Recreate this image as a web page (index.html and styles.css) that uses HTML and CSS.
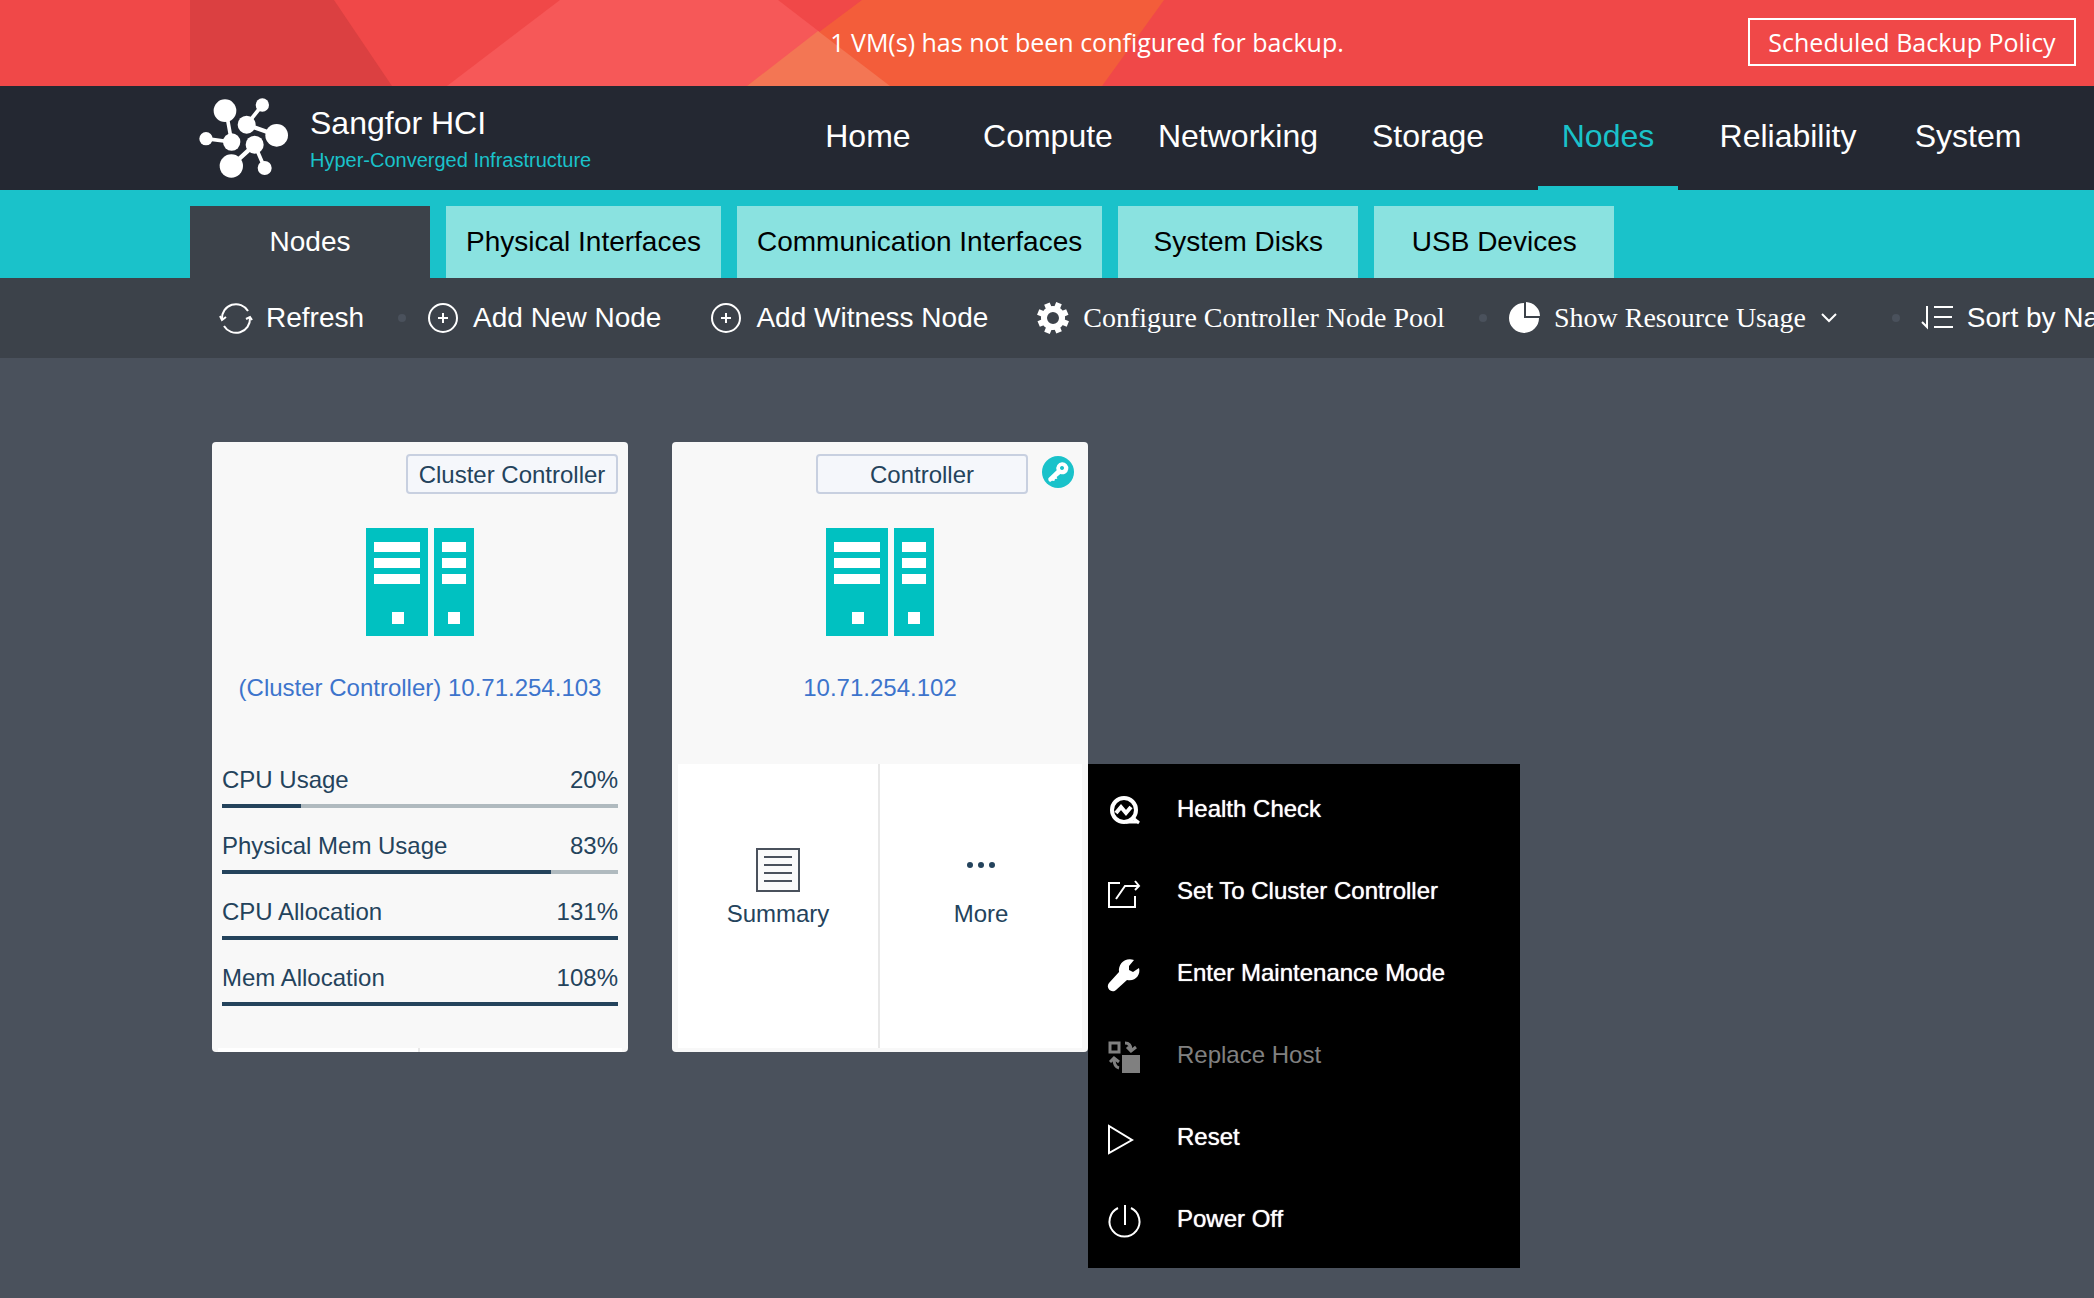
FILE: index.html
```html
<!DOCTYPE html>
<html lang="en">
<head>
<meta charset="utf-8">
<title>Sangfor HCI - Nodes</title>
<link rel="stylesheet" href="styles.css">
</head>
<body>
<svg class="sprite" aria-hidden="true">
  <symbol id="icon-add" viewBox="0 0 32 32"><circle cx="16" cy="16" r="14" fill="none" stroke="currentColor" stroke-width="2"/><path d="M11 16h10M16 11v10" stroke="currentColor" stroke-width="2"/></symbol>
  <symbol id="icon-server" viewBox="0 0 108 108"><path fill="#00c1c1" d="M0 0h62v108H0zM68 0h40v108H68z"/><path fill="#fff" d="M8 14h46v10H8zM8 30h46v10H8zM8 46h46v10H8zM76 14h24v10H76zM76 30h24v10H76zM76 46h24v10H76zM26 84h12v12H26zM82 84h12v12H82z"/></symbol>
</svg>

<div class="banner">
  <svg class="banner-art" viewBox="0 0 974 86" aria-hidden="true">
    <path fill="#db4041" d="M0 0h144l58 86H0z"/>
    <path fill="#f65858" d="M370 0h218l112 86H257z"/>
    <path fill="#f35d3a" d="M672 0h302l-62 86H557z"/>
    <path fill="#f37654" d="M628 31l72 55H557z"/>
  </svg>
  <p class="banner-text">1 VM(s) has not been configured for backup.</p>
  <button class="banner-button" type="button">Scheduled Backup Policy</button>
</div>

<header class="header">
  <a class="brand" href="#">
    <svg class="logo" viewBox="0 0 330 300" aria-hidden="true">
      <g stroke="#fff" stroke-width="13"><path d="M108 62L125 156M48 146L125 156M217 45L170 104M194 164L224 234" stroke-width="11"/><path d="M170 104L260 136M194 164L124 228"/></g>
      <g fill="#fff"><circle cx="105" cy="62" r="34"/><circle cx="217" cy="45" r="20"/><circle cx="170" cy="104" r="27"/><circle cx="260" cy="136" r="34"/><circle cx="48" cy="146" r="20"/><circle cx="125" cy="156" r="26"/><circle cx="194" cy="164" r="27"/><circle cx="124" cy="228" r="35"/><circle cx="224" cy="234" r="21"/></g>
    </svg>
    <span class="brand-text"><span class="brand-name">Sangfor HCI</span><span class="brand-sub">Hyper-Converged Infrastructure</span></span>
  </a>
  <nav class="nav" aria-label="Main">
    <a href="#">Home</a><a href="#">Compute</a><a href="#">Networking</a><a href="#">Storage</a><a class="active" href="#">Nodes</a><a href="#">Reliability</a><a href="#">System</a>
  </nav>
</header>

<nav class="tabs" aria-label="Nodes sections">
  <a class="tab active" href="#">Nodes</a><a class="tab" href="#">Physical Interfaces</a><a class="tab" href="#">Communication Interfaces</a><a class="tab" href="#">System Disks</a><a class="tab" href="#">USB Devices</a>
</nav>

<div class="toolbar">
  <button type="button" class="tool"><svg class="icon" viewBox="0 0 32 32" aria-hidden="true"><g fill="none" stroke="currentColor" stroke-width="2"><path d="M2 17A14 14 0 0 1 28 9M30 16A14 14 0 0 1 4 24"/><path d="M0 14l2 4 4-3M32 18l-2-3-4 2"/></g></svg>Refresh</button>
  <span class="dot"></span>
  <button type="button" class="tool"><svg class="icon" aria-hidden="true"><use href="#icon-add"/></svg>Add New Node</button>
  <button type="button" class="tool"><svg class="icon" aria-hidden="true"><use href="#icon-add"/></svg>Add Witness Node</button>
  <button type="button" class="tool serif"><svg class="icon" viewBox="0 0 32 32" aria-hidden="true"><g fill="none" stroke="currentColor" transform="rotate(22 16 16)"><circle cx="16" cy="16" r="9" stroke-width="6"/><path d="M16 0v6M16 26v6M0 16h6M26 16h6M5 5l4 4M23 23l4 4M27 5l-4 4M9 23l-4 4" stroke-width="6"/></g></svg>Configure Controller Node Pool</button>
  <span class="dot"></span>
  <button type="button" class="tool serif"><svg class="icon" viewBox="0 0 32 32" aria-hidden="true"><path fill="currentColor" d="M16 1v15h15A15 15 0 1 1 16 1zM18 0a15 14 0 0 1 14 14H18z"/></svg>Show Resource Usage<svg class="chevron" viewBox="0 0 18 10" aria-hidden="true"><path d="M2 1l7 7 7-7" fill="none" stroke="currentColor" stroke-width="2"/></svg></button>
  <span class="dot"></span>
  <button type="button" class="tool"><svg class="icon" viewBox="0 0 32 32" aria-hidden="true"><path d="M6 4v21L1 20M13 5h19M13 15h18M13 25h19" fill="none" stroke="currentColor" stroke-width="2"/></svg>Sort by Name</button>
</div>

<main class="nodes">
  <article class="card">
    <div class="card-head"><span class="tag">Cluster Controller</span></div>
    <svg class="server" aria-hidden="true"><use href="#icon-server"/></svg>
    <a class="node-name" href="#">(Cluster Controller) 10.71.254.103</a>
    <div class="usage">
      <div class="metric"><span>CPU Usage</span><span>20%</span><div class="bar"><div class="fill" style="width:20%"></div></div></div>
      <div class="metric"><span>Physical Mem Usage</span><span>83%</span><div class="bar"><div class="fill" style="width:83%"></div></div></div>
      <div class="metric"><span>CPU Allocation</span><span>131%</span><div class="bar"><div class="fill" style="width:100%"></div></div></div>
      <div class="metric"><span>Mem Allocation</span><span>108%</span><div class="bar"><div class="fill" style="width:100%"></div></div></div>
    </div>
    <div class="card-foot"><span></span><span></span></div>
  </article>

  <article class="card">
    <div class="card-head"><span class="tag">Controller</span>
      <svg class="key" viewBox="0 0 96 96" aria-hidden="true"><circle cx="48" cy="48" r="48" fill="#1ac2ca"/><path fill="#fff" fill-rule="evenodd" d="M60 19a18 18 0 1 1-5 35L44 63l2 5-7 1-2 6-7-1-6 4-5-5v-6l25-24A18 18 0 0 1 60 19zM60 30a6 6 0 1 0 .1 0z"/></svg>
    </div>
    <svg class="server" aria-hidden="true"><use href="#icon-server"/></svg>
    <a class="node-name" href="#">10.71.254.102</a>
    <div class="actions">
      <button type="button" class="action"><svg class="action-icon" viewBox="0 0 44 44" aria-hidden="true"><g fill="none" stroke="#4a515c" stroke-width="2"><path fill="#fafafa" d="M1 1h42v42H1z"/><path d="M8 9h28M8 17h28M8 25h28M8 33h28"/></g></svg>Summary</button>
      <button type="button" class="action" aria-expanded="true"><svg class="action-icon" viewBox="0 0 44 44" aria-hidden="true"><g fill="#24435c"><circle cx="11" cy="17" r="3"/><circle cx="22" cy="17" r="3"/><circle cx="33" cy="17" r="3"/></g></svg>More</button>
    </div>
    <div class="menu">
      <button type="button"><svg class="icon" viewBox="0 0 32 32" aria-hidden="true"><g fill="none" stroke="currentColor"><circle cx="16" cy="15" r="12" stroke-width="4"/><path d="M25 23l6 5M18 27h13" stroke-width="3"/><path d="M8 18l5-6 5 6 5-6" stroke-width="4"/></g></svg>Health Check</button>
      <button type="button"><svg class="icon" viewBox="0 0 32 32" aria-hidden="true"><path d="M12 6H1v24h26V19M8 22l9-13h14M27 4l4 5-4 4" fill="none" stroke="currentColor" stroke-width="2"/></svg>Set To Cluster Controller</button>
      <button type="button"><svg class="icon" viewBox="0 0 32 32" aria-hidden="true"><path fill="currentColor" d="M26 1l-5 6v4l4 2 6-4c2 7-4 14-12 12L8 31c-4 4-11-2-7-7l10-11C10 5 17-2 26 1z"/></svg>Enter Maintenance Mode</button>
      <button type="button" disabled><svg class="icon" viewBox="0 0 32 32" aria-hidden="true"><path fill="currentColor" d="M14 14h18v18H14z"/><g fill="none" stroke="currentColor" stroke-width="3"><path d="M2 2h9v9H2zM17 2c4 0 6 2 6 7M19 6l4 4 5-4M11 27c-4-1-5-4-5-9M2 21l4-4 5 4"/></g></svg>Replace Host</button>
      <button type="button"><svg class="icon" viewBox="0 0 32 32" aria-hidden="true"><path d="M1 3v27l23-13z" fill="none" stroke="currentColor" stroke-width="2"/></svg>Reset</button>
      <button type="button"><svg class="icon" viewBox="0 0 32 32" aria-hidden="true"><path d="M10 3a15 15 0 1 0 13 0M17 0v20" fill="none" stroke="currentColor" stroke-width="2"/></svg>Power Off</button>
    </div>
  </article>
</main>
</body>
</html>
```
FILE: styles.css
```css
* { box-sizing: border-box; }

body {
  margin: 0;
  min-height: 100vh;
  background: #4a515c;
  color: #24435c;
  font-family: "Liberation Sans", Arial, sans-serif;
  font-size: 24px;
  line-height: 32px;
  overflow-x: hidden;
}

a { color: inherit; text-decoration: none; }
button { margin: 0; padding: 0; border: 0; background: none; color: inherit; font: inherit; cursor: pointer; }
svg { display: block; flex: none; }
.sprite { position: absolute; width: 0; height: 0; }
.icon { width: 32px; height: 32px; overflow: visible; }

/* Alert banner */
.banner {
  position: relative;
  display: flex;
  align-items: center;
  height: 86px;
  padding: 0 18px 2px 426px;
  background: #f04848;
  color: #fff;
  font-family: "Open Sans", "Noto Sans", sans-serif;
  font-size: 25px;
}
.banner-art { position: absolute; left: 190px; top: 0; width: 974px; height: 86px; }
.banner-text { position: relative; flex: 1; margin: 0; text-align: center; }
.banner-button { position: relative; width: 328px; height: 48px; border: 2px solid #fff; line-height: 40px; }

/* Header */
.header {
  display: flex;
  justify-content: space-between;
  height: 104px;
  padding: 0 56px 0 190px;
  background: #242832;
  color: #fff;
}
.brand { display: flex; align-items: center; gap: 10px; }
.logo { width: 110px; height: 100px; margin-top: 4px; }
.brand-text { display: flex; flex-direction: column; gap: 4px; }
.brand-name { font-size: 32px; line-height: 40px; }
.brand-sub { color: #1ac2ca; font-size: 20px; line-height: 26px; }
.nav { display: flex; gap: 40px; font-size: 32px; line-height: 100px; }
.nav a { min-width: 140px; border-bottom: 4px solid transparent; text-align: center; }
.nav .active { border-color: #1ac2ca; color: #1ac2ca; }

/* Section tabs */
.tabs { display: flex; gap: 16px; padding: 16px 0 0 190px; background: #1ac2ca; }
.tab {
  min-width: 240px;
  padding: 0 20px;
  background: #8ae2e0;
  color: #000;
  font-size: 28px;
  line-height: 72px;
  text-align: center;
}
.tab.active { background: #3c424a; color: #fff; }

/* Toolbar */
.toolbar {
  display: flex;
  align-items: center;
  height: 80px;
  padding-left: 220px;
  background: #3c424a;
  color: #fff;
  font-size: 28px;
  overflow: hidden;
}
.tool { display: flex; flex: none; align-items: center; gap: 14px; white-space: nowrap; }
.tool + .tool { margin-left: 49px; }
.serif { font-family: "Liberation Serif", "Times New Roman", serif; }
.chevron { width: 18px; height: 10px; margin-right: 20px; }
.dot { flex: none; width: 8px; height: 8px; margin: 0 21px 0 34px; border-radius: 50%; background: #4a515c; }

/* Node cards */
.nodes { display: flex; flex-wrap: wrap; gap: 44px; padding: 84px 212px; }
.card {
  position: relative;
  display: flex;
  flex-direction: column;
  align-items: center;
  width: 416px;
  height: 610px;
  border-radius: 4px;
  background: #f8f8f8;
}
.card-head { display: flex; align-self: stretch; justify-content: flex-end; gap: 14px; padding: 12px 10px 34px; }
.tag {
  width: 212px;
  height: 40px;
  border: 2px solid #c8d0e0;
  border-radius: 4px;
  background: #f5f7fb;
  line-height: 38px;
  text-align: center;
}
.key { width: 32px; height: 32px; margin: 2px 4px 0 0; }
.server { width: 108px; height: 108px; }
.node-name { margin-top: 36px; color: #3d74cc; }

.usage { align-self: stretch; margin-top: 60px; padding: 0 10px; }
.metric { display: flex; flex-wrap: wrap; justify-content: space-between; row-gap: 8px; height: 66px; align-content: flex-start; }
.bar { width: 100%; height: 4px; background: #b0babf; }
.fill { height: 4px; background: #24435c; }
.card-foot {
  display: grid;
  grid-template-columns: 1fr 1fr;
  align-self: stretch;
  height: 4px;
  margin: auto 6px 0;
  background: #fff;
}
.card-foot span:first-child { border-right: 2px solid #e8e8e8; }

.actions { display: grid; grid-template-columns: 1fr 1fr; align-self: stretch; flex: 1; margin: 60px 6px 4px; background: #fff; }
.action { display: flex; flex-direction: column; align-items: center; gap: 6px; padding-top: 84px; }
.action:first-child { border-right: 2px solid #e8e8e8; }
.action-icon { width: 44px; height: 44px; }

/* Popup menu of the node */
.menu { position: absolute; left: 100%; top: 322px; width: 432px; padding: 4px 0 8px; background: #000; color: #fff; }
.menu button { display: flex; align-items: center; gap: 37px; width: 100%; height: 82px; padding-left: 20px; text-align: left; text-shadow: 0 0 1px #fff; }
.menu button:disabled { color: #808080; text-shadow: none; }
.menu .icon { margin-top: 4px; }
```
